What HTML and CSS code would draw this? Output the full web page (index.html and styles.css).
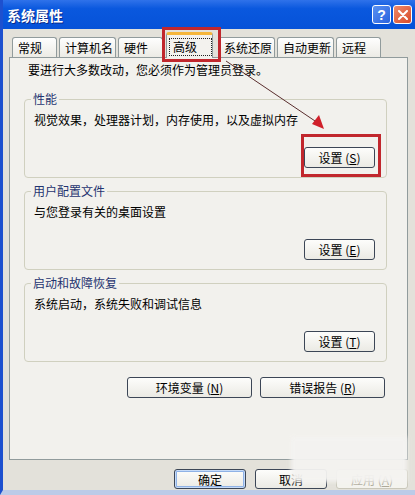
FILE: index.html
```html
<!DOCTYPE html>
<html>
  <head>
    <meta charset="utf-8" />
    <title>系统属性</title>
    <link rel="stylesheet" href="styles.css">
  </head>

  <body>
    <div class="window">
      <div class="titlebar">
        <span class="title">系统属性</span>
        <div class="caption-btns">
          <span class="cap-btn help">?</span>
          <span class="cap-btn close">
            <svg width="10" height="10" viewBox="0 0 10 10">
              <path d="M1 1 L9 9 M9 1 L1 9" stroke="#fff" stroke-width="2" stroke-linecap="round" />
            </svg>
          </span>
        </div>
      </div>

      <div class="tabs">
        <div class="tab tab-2">常规</div>
        <div class="tab tab-4">计算机名</div>
        <div class="tab tab-2">硬件</div>
        <div class="tab active"><span class="focus">高级</span></div>
        <div class="tab tab-4">系统还原</div>
        <div class="tab tab-4">自动更新</div>
        <div class="tab tab-2">远程</div>
      </div>

      <div class="panel">
        <p class="note">要进行大多数改动，您必须作为管理员登录。</p>

        <fieldset class="group">
          <legend>性能</legend>
          <p>视觉效果，处理器计划，内存使用，以及虚拟内存</p>
          <div class="group-actions">
            <button class="btn">设置 (<u>S</u>)</button>
          </div>
        </fieldset>

        <fieldset class="group">
          <legend>用户配置文件</legend>
          <p>与您登录有关的桌面设置</p>
          <div class="group-actions">
            <button class="btn">设置 (<u>E</u>)</button>
          </div>
        </fieldset>

        <fieldset class="group">
          <legend>启动和故障恢复</legend>
          <p>系统启动，系统失败和调试信息</p>
          <div class="group-actions">
            <button class="btn">设置 (<u>T</u>)</button>
          </div>
        </fieldset>

        <div class="panel-actions">
          <button class="btn wide">环境变量 (<u>N</u>)</button>
          <button class="btn wide">错误报告 (<u>R</u>)</button>
        </div>
      </div>

      <div class="dialog-actions">
        <button class="btn default">确定</button>
        <button class="btn">取消</button>
        <button class="btn" disabled>应用 (<u>A</u>)</button>
      </div>
    </div>

    <!-- 标注 -->
    <svg class="annot" width="415" height="495">
      <rect x="163.5" y="28.5" width="56" height="32" fill="none" stroke="#c1272d" stroke-width="3" />
      <rect x="302.5" y="135.5" width="77" height="40" fill="none" stroke="#c1272d" stroke-width="3" />
      <line x1="226" y1="61" x2="318" y2="123" stroke="#5a2e2e" stroke-width="1" />
      <polygon points="324,129 312,124 319,115" fill="#d0202a" />
    </svg>
    <div class="glare"></div>
  </body>
</html>
```

FILE: styles.css
```css
* {
  margin: 0;
  padding: 0;
  box-sizing: border-box;
}
body {
  position: relative;
  width: 415px;
  height: 495px;
  overflow: hidden;
  font-family: "Noto Sans CJK SC", "Liberation Sans", sans-serif;
  font-size: 12px;
  color: #000;
  background: #e3e1da;
}
.window {
  width: 415px;
  height: 495px;
  background: #e3e1da;
  border-left: 3px solid #1d50cf;
  border-bottom: 5px solid #bccbe8;
}
.titlebar {
  height: 29px;
  display: flex;
  align-items: center;
  justify-content: space-between;
  padding: 0 3px 0 4px;
  background: linear-gradient(#2f72ea, #0a58de 30%, #0652d8);
}
.title {
  color: #fff;
  font-size: 14px;
  font-weight: 700;
  text-shadow: 1px 1px 0 #0a2a8a;
}
.caption-btns {
  display: flex;
  gap: 2px;
}
.cap-btn {
  width: 19px;
  height: 19px;
  border: 1px solid #fff;
  border-radius: 3px;
  display: flex;
  align-items: center;
  justify-content: center;
  color: #fff;
  font-family: "Liberation Sans", sans-serif;
  font-size: 14px;
  font-weight: 700;
}
.help {
  background: linear-gradient(135deg, #5a92f2, #2a62de);
}
.close {
  background: linear-gradient(135deg, #ee8a6a, #d84a2a);
}

.tabs {
  height: 25px;
  margin-top: 3px;
  padding-left: 9px;
  display: flex;
  align-items: flex-end;
  gap: 2px;
}
.tab {
  height: 20px;
  line-height: 19px;
  padding-left: 5px;
  border: 1px solid #919b9c;
  border-bottom: none;
  border-radius: 3px 3px 0 0;
  background: linear-gradient(#fefefe, #ecebe5);
  white-space: nowrap;
}
.tab-2 {
  width: 45px;
}
.tab-4 {
  width: 57px;
}
.tab.active {
  position: relative;
  z-index: 1;
  width: 47px;
  height: 26px;
  margin: 0 3px -1px 1px;
  padding: 3px 0 0 2px;
  border-top: 3px solid #f5b63c;
  background: #f3f2ee;
}
.focus {
  display: block;
  width: 43px;
  height: 18px;
  line-height: 16px;
  padding-left: 3px;
  border: 1px dotted #222;
}

.panel {
  width: 399px;
  height: 403px;
  margin-left: 6px;
  padding-top: 4px;
  border: 1px solid #919b9c;
  background: #f2f1ed;
}
.note {
  margin-left: 18px;
  line-height: 16px;
}
.group {
  margin: 13px 20px 0 14px;
  padding: 0 11px 9px 9px;
  border: 1px solid #d0d0bf;
  border-radius: 4px;
  min-width: 0;
}
.group + .group {
  margin-top: 5px;
}
.group legend {
  margin-left: -3px;
  padding: 0 2px;
  line-height: 16px;
  color: #1f3470;
}
.group p {
  margin-top: 5px;
  line-height: 16px;
}
.group-actions {
  display: flex;
  justify-content: flex-end;
  margin-top: 19px;
}

.btn {
  width: 71px;
  height: 21px;
  border: 1px solid #3c4656;
  border-radius: 3px;
  background: linear-gradient(#fdfdfb, #ebeae4);
  font-family: inherit;
  font-size: 12px;
  color: #000;
  white-space: nowrap;
}
.btn u {
  text-underline-offset: 1px;
}
.btn.wide {
  width: 125px;
}
.btn.default {
  box-shadow: inset 0 0 0 1px #c6dbf8, inset 0 0 0 2px #8fb2e6;
}
.btn:disabled {
  border-color: #c9c7ba;
  color: #aca899;
  background: #f4f3ee;
}
.panel-actions {
  display: flex;
  justify-content: flex-end;
  gap: 8px;
  margin: 15px 22px 0 0;
}
.dialog-actions {
  display: flex;
  justify-content: flex-end;
  gap: 9px;
  margin-top: 9px;
  padding-right: 7px;
}
.dialog-actions .btn {
  width: 72px;
  height: 20px;
}

.annot {
  position: absolute;
  left: 0;
  top: 0;
  pointer-events: none;
}
.glare {
  position: absolute;
  left: 291px;
  top: 437px;
  width: 116px;
  height: 45px;
  background: #f4f3f1;
  filter: blur(2px);
  opacity: 0.95;
}
```
